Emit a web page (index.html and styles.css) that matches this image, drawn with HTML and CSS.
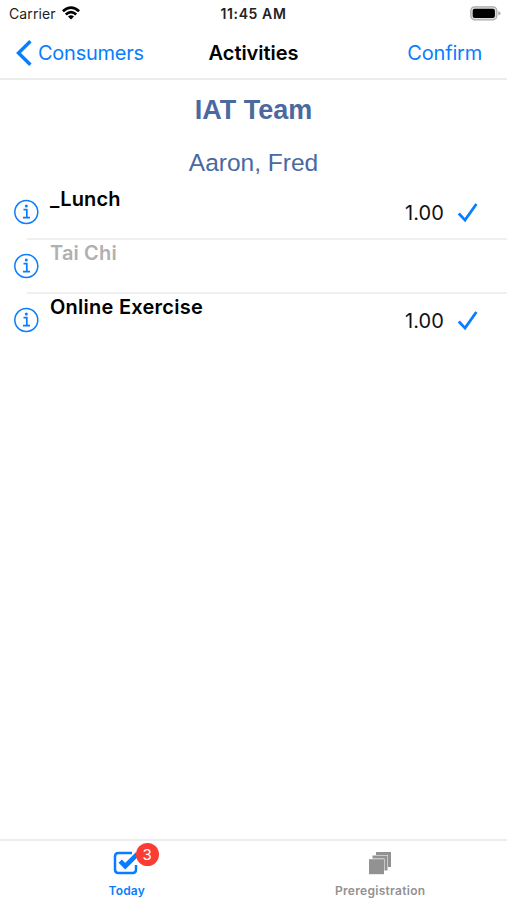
FILE: index.html
```html
<!DOCTYPE html>
<html lang="en">
<head>
<meta charset="utf-8">
<title>Activities</title>
<link rel="stylesheet" href="styles.css">
</head>
<body>
<div class="app">
  <header class="status">
    <div class="carrier"><span class="carrier-name">Carrier</span>
      <svg class="wifi" width="18" height="14" viewBox="0 0 18 14" fill="none" stroke="#000" stroke-width="2.7"><path d="M.9 5.3Q9-2.2 17.1 5.3"/><path d="M3.8 8.5Q9 3.7 14.2 8.5"/><path d="M6 10.5Q9 7.8 12 10.5L9 13.6Z" fill="#000" stroke="none"/></svg>
    </div>
    <span class="time">11:45 AM</span>
    <svg class="battery" width="31" height="15" viewBox="0 0 31 15"><rect x=".8" y=".8" width="26" height="13" rx="3.8" fill="#ddd" stroke="#aaa" stroke-width="1.2"/><rect x="2.7" y="2.7" width="22.2" height="9.2" rx="2" fill="#000"/><path d="M28.3 5Q30.6 6 30.6 7.3T28.3 9.6Z" fill="#aaa"/></svg>
  </header>
  <nav class="navbar">
    <a class="back"><svg width="16" height="26" viewBox="0 0 16 26" fill="none" stroke="#087dff" stroke-width="3.4"><path d="M14.4 1.3 2.5 13l11.9 11.7"/></svg><span>Consumers</span></a>
    <h1>Activities</h1>
    <a class="confirm">Confirm</a>
  </nav>
  <main>
    <h2>IAT Team</h2>
    <p class="person">Aaron, Fred</p>
    <ul class="list">
      <li><svg class="info" width="26" height="26" viewBox="0 0 26 26" fill="none" stroke="#087dff"><circle cx="13.3" cy="13" r="11.5" stroke-width="1.5"/><path d="M10.5 10.7h3.3v7.6M10 18.6h7" stroke-width="1.7"/><circle cx="13.3" cy="7" r="1.5" fill="#087dff" stroke="none"/></svg>
        <div class="cell"><span class="name">_Lunch</span><span class="amount">1.00</span><svg class="check" width="22" height="22" viewBox="0 0 22 22" fill="none" stroke="#087dff" stroke-width="2.8"><path d="m1.8 11.5 6.2 6.6L19.4 2"/></svg></div></li>
      <li><svg class="info" width="26" height="26" viewBox="0 0 26 26" fill="none" stroke="#087dff"><circle cx="13.3" cy="13" r="11.5" stroke-width="1.5"/><path d="M10.5 10.7h3.3v7.6M10 18.6h7" stroke-width="1.7"/><circle cx="13.3" cy="7" r="1.5" fill="#087dff" stroke="none"/></svg>
        <div class="cell"><span class="name muted">Tai Chi</span></div></li>
      <li><svg class="info" width="26" height="26" viewBox="0 0 26 26" fill="none" stroke="#087dff"><circle cx="13.3" cy="13" r="11.5" stroke-width="1.5"/><path d="M10.5 10.7h3.3v7.6M10 18.6h7" stroke-width="1.7"/><circle cx="13.3" cy="7" r="1.5" fill="#087dff" stroke="none"/></svg>
        <div class="cell"><span class="name long">Online Exercise</span><span class="amount">1.00</span><svg class="check" width="22" height="22" viewBox="0 0 22 22" fill="none" stroke="#087dff" stroke-width="2.8"><path d="m1.8 11.5 6.2 6.6L19.4 2"/></svg></div></li>
    </ul>
  </main>
  <footer class="tabs">
    <a class="tab active"><span class="icon"><svg width="28" height="26" viewBox="0 0 28 26" fill="none" stroke="#087dff"><path d="M19 3H5.5Q2 3 2 6.5v13Q2 23 5.5 23h14Q23 23 23 19.5V15" stroke-width="2.5"/><path d="m7.2 11.2 5 5L24.5 4" stroke-width="4.6"/></svg><span class="badge">3</span></span><span class="label">Today</span></a>
    <a class="tab"><span class="icon"><svg width="28" height="26" viewBox="0 0 28 26" fill="#929292"><path d="M10 2h15v15h-3V5H10Z"/><path d="M6.5 5.6h15v15h-3v-12h-12Z"/><path d="M3 9.2h15v15H3Z"/></svg></span><span class="label prereg">Preregistration</span></a>
  </footer>
</div>
</body>
</html>
```
FILE: styles.css
```css
* { box-sizing: border-box; }
body { margin: 0; background: #fff; color: #000; font-family: Inter, "Liberation Sans", sans-serif; }
.app { height: 900px; display: flex; flex-direction: column; }
.status { height: 27px; padding: 0 6px 0 9px; display: grid; grid-template-columns: 1fr auto 1fr; align-items: center; }
.carrier { display: flex; align-items: center; gap: 6px; font-size: 14px; color: #222; }
.carrier-name { letter-spacing: .1px; }
.wifi { margin-top: -2px; }
.time { font-size: 14px; font-weight: 600; color: #222; letter-spacing: .6px; margin-right: 3px; }
.battery { justify-self: end; }
.navbar { height: 53px; padding: 0 25px 0 16px; display: grid; grid-template-columns: 1fr auto 1fr; align-items: center; border-bottom: 2px solid #ececec; font-size: 20px; }
.back, .confirm { color: #087dff; }
.back { display: flex; align-items: center; gap: 6px; letter-spacing: -.25px; }
.confirm { justify-self: end; letter-spacing: -.2px; }
h1 { margin: 0 -9px 0 0; font-size: 20px; font-weight: 600; letter-spacing: -.05px; }
main { flex: 1; }
h2, .person { margin: 0; text-align: center; color: #49699f; font-family: "Liberation Sans", Arial, sans-serif; }
h2 { height: 60px; line-height: 60px; font-size: 27px; }
.person { height: 46px; line-height: 45px; font-size: 24.5px; }
.list { list-style: none; margin: 0; padding: 0; }
.list li { height: 54px; display: flex; padding-left: 13px; }
.info { margin-top: 13px; flex: none; }
.cell { flex: 1; display: flex; align-items: center; padding: 1px 28px 2px 11px; }
.name { flex: 1; align-self: flex-start; line-height: 24px; font-size: 20px; font-weight: 600; letter-spacing: .15px; }
.long { letter-spacing: .25px; }
.muted { color: #b0b0b0; }
.amount { font-size: 20px; margin-right: 13px; color: #111; letter-spacing: .1px; }
.list li:not(:last-child) { background: linear-gradient(#efefef, #efefef) 27px 52px / 480px 2px no-repeat; }
.tabs { height: 61px; border-top: 2px solid #ececec; display: grid; grid-template-columns: 1fr 1fr; }
.tab { display: flex; flex-direction: column; align-items: center; padding-top: 9px; color: #929292; }
.active { color: #087dff; }
.icon { position: relative; height: 26px; }
.badge { position: absolute; left: 23px; top: -7px; width: 23px; height: 23px; border-radius: 50%; background: #fa3c34; color: #fff; font-size: 15px; line-height: 23px; text-align: center; }
.label { font-size: 12px; font-weight: 600; line-height: 16px; margin-top: 7px; letter-spacing: .2px; }
.prereg { letter-spacing: .3px; }
```
